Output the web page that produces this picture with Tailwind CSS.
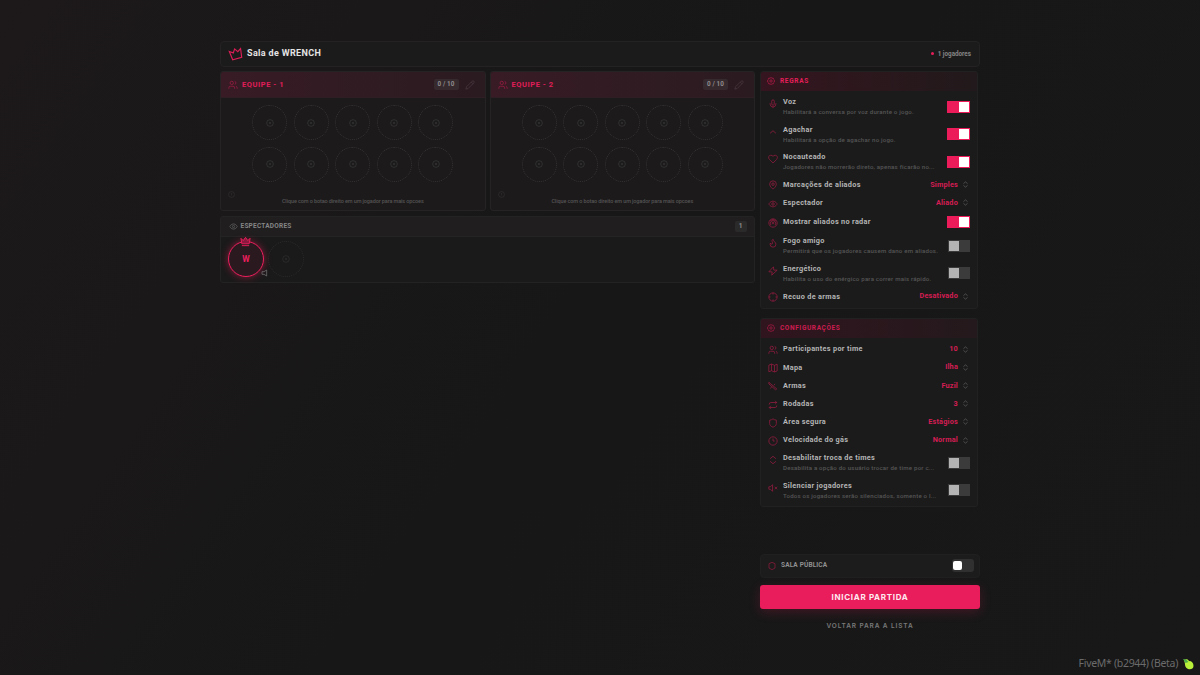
<!DOCTYPE html>
<html lang="pt-BR">
<head>
  <meta charset="UTF-8" />
  <meta name="viewport" content="width=device-width, initial-scale=1" />
  <title>Sala de WRENCH</title>
  <script src="https://cdn.jsdelivr.net/npm/@tailwindcss/browser@4"></script>
</head>
<body class="h-screen overflow-hidden bg-[#181818] bg-linear-[125deg,#1d191b_0%,#1a1818_25%,#171717_50%,#181818_100%] font-['Roboto','Liberation_Sans',sans-serif] text-[#bdbdbd] relative">

  <!-- Icon set -->
  <svg class="hidden">
    <defs>
      <symbol id="users" viewBox="0 0 24 24"><path d="M16 21v-2a4 4 0 0 0-4-4H6a4 4 0 0 0-4 4v2M22 21v-2a4 4 0 0 0-3-3.87M16 3.13a4 4 0 0 1 0 7.75"/><circle cx="9" cy="7" r="4"/></symbol>
      <symbol id="pencil" viewBox="0 0 24 24"><path d="M17 3a2.85 2.83 0 1 1 4 4L7.5 20.5 2 22l1.500-5.500ZM15 5l4 4"/></symbol>
      <symbol id="crown" viewBox="0 0 24 24"><path d="M2 5l5 5 5-7 5 7 5-5-2 12H4ZM4 21h16"/></symbol>
      <symbol id="slot" viewBox="0 0 24 24"><circle cx="12" cy="12" r="10"/><circle cx="12" cy="12" r="2"/></symbol>
      <symbol id="eye" viewBox="0 0 24 24"><path d="M2 12s3.500-7 10-7 10 7 10 7-3.500 7-10 7-10-7-10-7Z"/><circle cx="12" cy="12" r="3"/></symbol>
      <symbol id="gear" viewBox="0 0 24 24"><path d="M12 1.500l3 2.200 3.700-.2 1 3.500 2.800 2.300-1.300 2.700 1.300 3-2.800 2.200-1 3.500-3.700-.2-3 2.200-3-2.200-3.700.2-1-3.500L1.500 15l1.300-3-1.300-2.700L4.300 7l1-3.500 3.700.2Z"/><circle cx="12" cy="12" r="3.500"/></symbol>
      <symbol id="mic" viewBox="0 0 24 24"><path d="M12 2a3 3 0 0 0-3 3v7a3 3 0 0 0 6 0V5a3 3 0 0 0-3-3ZM19 10v2a7 7 0 0 1-14 0v-2M12 19v3"/></symbol>
      <symbol id="up" viewBox="0 0 24 24"><path d="m5 15 7-6 7 6"/></symbol>
      <symbol id="heart" viewBox="0 0 24 24"><path d="M12 21.500l-8.500-8.500C-.5 8.500 2 3 7 3c2 0 3.700 1 5 2.800C13.300 4 15 3 17 3c5 0 7.500 5.500 3.500 10Z"/></symbol>
      <symbol id="pin" viewBox="0 0 24 24"><path d="M20 10c0 6-8 12-8 12s-8-6-8-12a8 8 0 0 1 16 0Z"/><circle cx="12" cy="10" r="3"/></symbol>
      <symbol id="radar" viewBox="0 0 24 24"><circle cx="12" cy="12" r="10"/><path d="M5 8a8 8 0 0 1 14 0M7 17a6.500 6.500 0 1 1 10 0"/><circle cx="12" cy="12" r="2"/></symbol>
      <symbol id="flame" viewBox="0 0 24 24"><path d="M8.500 14.500A2.500 2.500 0 0 0 11 12c0-1.400-.5-2-1-3-1.100-2.100-.2-4 2-6 .5 2.500 2 4.900 4 6.500s3 3.500 3 5.500a7 7 0 1 1-14 0c0-1.200.4-2.300 1-3a2.500 2.500 0 0 0 2.500 2.500Z"/></symbol>
      <symbol id="bolt" viewBox="0 0 24 24"><path d="M13 2 2 14h8l-1 8L22 10h-8Z"/></symbol>
      <symbol id="target" viewBox="0 0 24 24"><circle cx="12" cy="12" r="10"/><path d="M22 12h-4M6 12H2M12 6V2M12 22v-4"/></symbol>
      <symbol id="map" viewBox="0 0 24 24"><path d="m2 5 6.500-2.500 7 3L22 3v16l-6.500 2.500-7-3L2 21ZM8.500 2.500v16M15.500 5.500v16"/></symbol>
      <symbol id="gun" viewBox="0 0 24 24"><path d="m2 3 19 16M2 7l16 14M2 3v4M21 19l-3 2M9 13l-3 5M14 10l3-3"/></symbol>
      <symbol id="repeat" viewBox="0 0 24 24"><path d="m17 2 4 4-4 4M3 11v-1a4 4 0 0 1 4-4h14M7 22l-4-4 4-4M21 13v1a4 4 0 0 1-4 4H3"/></symbol>
      <symbol id="shield" viewBox="0 0 24 24"><path d="M20 13c0 5-3.500 7.500-8 9-4.500-1.500-8-4-8-9V5c3 0 6-1 8-3 2 2 5 3 8 3Z"/></symbol>
      <symbol id="clock" viewBox="0 0 24 24"><circle cx="12" cy="12" r="10"/><path d="M12 6v6h4"/></symbol>
      <symbol id="updown" viewBox="0 0 24 24"><path d="m5 9 7-6 7 6M5 15l7 6 7-6"/></symbol>
      <symbol id="mute" viewBox="0 0 24 24"><path d="M11 4 6 9H2v6h4l5 5ZM22 9l-6 6M16 9l6 6"/></symbol>
    </defs>
  </svg>

  <div class="mx-auto w-[760px] pt-[41px]">
    <header class="flex h-[25.500px] items-center rounded-[4px] border border-[#242223] bg-[#1c1b1b] px-2">
      <svg class="size-[14px] -rotate-15 fill-none stroke-[#d91d56] stroke-2" viewBox="0 0 24 24"><path d="M2 5l6 4 4-6 4 6 6-4-2 15H4Z"/></svg>
      <h1 class="ml-1 text-[9px] font-bold tracking-[0.350px] text-[#e4e4e4]">Sala de WRENCH</h1>
      <span class="ml-auto size-[3px] rounded-full bg-[#e61e5a]"></span>
      <span class="ml-1 pt-px text-[6.300px] font-bold text-[#858585]">1 jogadores</span>
    </header>

    <main class="mt-[4.500px] flex gap-[5px]">
      <div class="w-[535px]">
        <div id="teams" class="flex gap-1"></div>

        <section class="mt-[5px] h-[66.500px] rounded-[3px] border border-[#242323] bg-[#1b1a1a]">
          <div class="flex h-5 items-center border-b border-[#252424] bg-[#201e1f] px-[7.500px]">
            <svg class="size-[9px] fill-none stroke-[#606060] stroke-2"><use href="#eye"/></svg>
            <h2 class="ml-[3px] text-[6.500px] font-bold tracking-[0.230px] text-[#858585]">ESPECTADORES</h2>
            <span class="ml-auto flex h-[11px] w-3 items-center justify-center rounded-[2px] bg-[#2b2a2a] text-[6.500px] font-bold text-[#8b8b8b]">1</span>
          </div>
          <div class="flex gap-[4px] px-[7px] pt-1">
            <div class="relative flex size-[36px] items-center justify-center rounded-full border-[1.500px] border-[#ec1e5c] bg-[#2a1a20] text-[8.500px] font-bold text-[#ec1e5c] shadow-[0_0_7px_#ec1e5c80]">
              W
              <svg class="absolute -top-[6px] left-[11px] size-[11px] fill-[#8c1a40] stroke-[#ec1e5c] stroke-2"><use href="#crown"/></svg>
              <svg class="absolute -right-[5px] -bottom-[1px] size-[8px] fill-none stroke-[#7b7b7b] stroke-2" viewBox="0 0 24 24"><path d="M20 3v18l-8-5H6V8h6Z"/></svg>
            </div>
            <div class="flex size-[36px] items-center justify-center rounded-full border border-dotted border-[#2b2a2a]">
              <svg class="size-2 fill-none stroke-[#323131] stroke-2"><use href="#slot"/></svg>
            </div>
          </div>
        </section>
      </div>

      <aside class="w-[220px]">
        <section class="h-[237.500px] w-[218px] overflow-hidden rounded-[3px] border border-[#222121] bg-[#1b1b1b]">
          <div class="flex h-[19px] items-center bg-linear-to-r from-[#35151f] to-[#21191b] px-1.5">
            <svg class="mb-px size-[8px] fill-none stroke-[#c21c4d] stroke-2"><use href="#gear"/></svg>
            <h2 class="ml-[5px] text-[6.500px] font-bold tracking-[0.700px] text-[#e61e5a]">REGRAS</h2>
          </div>
          <div id="rules" class="pt-[1.900px]"></div>
        </section>

        <section class="mt-[9.500px] h-[189px] w-[218px] overflow-hidden rounded-[3px] border border-[#222121] bg-[#1b1b1b]">
          <div class="flex h-[19px] items-center bg-linear-to-r from-[#30151e] to-[#24191c] px-1.5">
            <svg class="mb-px size-[8px] fill-none stroke-[#b21b48] stroke-2"><use href="#gear"/></svg>
            <h2 class="ml-[5px] text-[6.500px] font-bold tracking-[0.620px] text-[#cd1c50]">CONFIGURAÇÕES</h2>
          </div>
          <div id="settings" class="pt-[2px]"></div>
        </section>

        <div class="mt-[46.500px] flex h-[24.500px] items-center rounded-[4px] border border-[#202020] bg-[#1d1c1c] pr-[5.500px] pl-[7px]">
          <svg class="size-[8px] fill-none stroke-[#9c1b42] stroke-2" viewBox="0 0 24 24"><path d="M12 1l9 4v13l-9 5-9-5V5Z"/></svg>
          <span class="ml-[5px] text-[6.500px] font-bold tracking-[0.140px] text-[#919191]">SALA PÚBLICA</span>
          <span class="ml-auto flex h-[13px] w-[22px] items-center rounded-[3px] bg-[#303030] px-[1.500px]"><span class="size-[9px] rounded-[2px] bg-white"></span></span>
        </div>
        <button class="mt-[7px] block h-[24px] w-full rounded-[3px] bg-[#e91d5b] font-['Inter',sans-serif] text-[8px] font-bold tracking-[0.680px] text-[#ffe9f0] shadow-[0_3px_12px_#e91d5b33]">INICIAR PARTIDA</button>
        <button class="mt-[12px] block h-3 w-full font-['Inter',sans-serif] text-[6.500px] font-semibold tracking-[0.880px] text-[#787878]">VOLTAR PARA A LISTA</button>
      </aside>
    </main>
  </div>

  <div class="absolute right-[6px] bottom-[4px] flex items-center gap-1 font-['Noto_Sans',sans-serif] text-[10.500px] leading-[15px] tracking-[-0.300px] text-[#6b6b6b]">
    <span>FiveM* (b2944) (Beta)</span>
    <svg class="size-[12px]" viewBox="0 0 12 12"><path d="M2 2c2-1 4-1 5 1 3 0 4.500 2 4.500 5 0 4-5 4-7 2-2-2-1-4-2.500-8Z" fill="#b9f03a"/><path d="M1 1l3 .5 2.500 2.500-3 1Z" fill="#4cae46"/></svg>
  </div>

<script>
  const rules = [
    { icon: 'mic', name: 'Voz', desc: 'Habilitará a conversa por voz durante o jogo.', on: true },
    { icon: 'up', name: 'Agachar', desc: 'Habilitará a opção de agachar no jogo.', on: true },
    { icon: 'heart', name: 'Nocauteado', desc: 'Jogadores não morrerão direto, apenas ficarão no...', on: true },
    { icon: 'pin', name: 'Marcações de aliados', value: 'Simples' },
    { icon: 'eye', name: 'Espectador', value: 'Aliado' },
    { icon: 'radar', name: 'Mostrar aliados no radar', on: true },
    { icon: 'flame', name: 'Fogo amigo', desc: 'Permitirá que os jogadores causem dano em aliados.', on: false },
    { icon: 'bolt', name: 'Energético', desc: 'Habilita o uso do enérgico para correr mais rápido.', on: false },
    { icon: 'target', name: 'Recuo de armas', value: 'Desativado' }
  ];

  const settings = [
    { icon: 'users', name: 'Participantes por time', value: '10' },
    { icon: 'map', name: 'Mapa', value: 'Ilha' },
    { icon: 'gun', name: 'Armas', value: 'Fuzil' },
    { icon: 'repeat', name: 'Rodadas', value: '3' },
    { icon: 'shield', name: 'Área segura', value: 'Estágios' },
    { icon: 'clock', name: 'Velocidade do gás', value: 'Normal' },
    { icon: 'updown', name: 'Desabilitar troca de times', desc: 'Desabilita a opção do usuário trocar de time por c...', on: false },
    { icon: 'mute', name: 'Silenciar jogadores', desc: 'Todos os jogadores serão silenciados, somente o l...', on: false }
  ];

  function control(row) {
    if (row.value) {
      return `
        <span class="ml-auto pt-px text-[7.300px] font-bold tracking-[0.200px] text-[#d51d53]">${row.value}</span>
        <svg class="ml-[4px] mr-[1px] size-[7px] fill-none stroke-[#707070] stroke-2"><use href="#updown"/></svg>`;
    }
    return row.on
      ? '<span class="ml-auto flex h-[12px] w-[23px] justify-end bg-[#ec1c5b] p-px"><span class="w-[10px] bg-white"></span></span>'
      : '<span class="ml-auto flex h-[12px] w-[22px] bg-[#3b3b3b] p-px"><span class="w-[10px] bg-[#b4b4b4]"></span></span>';
  }

  function renderRows(id, rows) {
    document.getElementById(id).innerHTML = rows.map(row => {
      const height = row.desc ? 'h-[27.500px]' : row.value ? 'h-[18.200px]' : 'h-[20.300px]';
      const iconPos = row.desc ? 'mb-[5px]' : 'mt-[2px]';
      const namePos = row.desc ? '' : 'pt-[0.800px]';
      return `
        <div class="flex ${height} items-center pl-[7px] pr-[7px]">
          <svg class="${iconPos} size-[10px] shrink-0 fill-none stroke-[#a01c44] stroke-[1.700]"><use href="#${row.icon}"/></svg>
          <div class="ml-[5px] whitespace-nowrap ${namePos}">
            <p class="text-[7.300px] leading-[10px] font-bold tracking-[0.310px] text-[#b5b5b5]">${row.name}</p>
            ${row.desc ? `<p class="text-[6.100px] leading-[9px] font-medium tracking-[0.210px] text-[#555555]">${row.desc}</p>` : ''}
          </div>
          ${control(row)}
        </div>`;
    }).join('');
  }

  const slot = `
    <div class="flex size-[35px] items-center justify-center rounded-full border border-dotted border-[#353333]">
      <svg class="size-2 fill-none stroke-[#3d3c3c] stroke-2"><use href="#slot"/></svg>
    </div>`;

  document.getElementById('teams').innerHTML = [1, 2].map(n => `
    <section class="h-[140px] w-[265.500px] overflow-hidden rounded-[3px] border border-[#252324] bg-[#1c1a1b]">
      <div class="flex h-[26px] items-center border-b border-[#2f1e25] bg-linear-to-r from-[#381b25] to-[#2a1b20] pr-2 pl-[7px]">
        <svg class="size-[10px] fill-none stroke-[#a01c44] stroke-[1.800]"><use href="#users"/></svg>
        <h2 class="ml-1 text-[7.500px] font-bold tracking-[0.560px] text-[#e01d58]">EQUIPE - ${n}</h2>
        <span class="ml-auto flex h-[11px] w-[25px] items-center justify-center rounded-[2px] bg-[#362a2f] text-[6.300px] font-bold tracking-[0.100px] text-[#908b8d]">0 / 10</span>
        <svg class="ml-[6px] mr-[2px] size-[10px] fill-none stroke-[#4c3c42] stroke-[1.700]"><use href="#pencil"/></svg>
      </div>
      <div class="mx-auto mt-[7px] grid w-[201px] grid-cols-5 gap-[6.500px]">${slot.repeat(10)}</div>
      <div class="relative mt-[15px] text-center text-[5.500px] leading-[8px] font-medium tracking-[-0.110px] text-[#555454]">
        <svg class="absolute -top-[6px] left-[7px] size-[7px] fill-none stroke-[#353434] stroke-2" viewBox="0 0 24 24"><circle cx="12" cy="12" r="10"/><path d="M12 7v6M12 16v2"/></svg>
        Clique com o botao direito em um jogador para mais opcoes
      </div>
    </section>`).join('');

  renderRows('rules', rules);
  renderRows('settings', settings);
</script>

</body>
</html>
